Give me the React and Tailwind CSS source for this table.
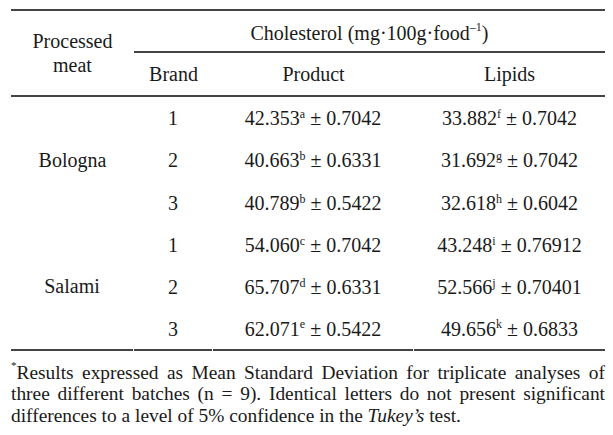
import React from 'react';

const rows = [
  { group: 'Bologna', items: [
    { brand: '1', p: '42.353', ps: 'a', pd: '0.7042', l: '33.882', ls: 'f', ld: '0.7042' },
    { brand: '2', p: '40.663', ps: 'b', pd: '0.6331', l: '31.692', ls: 'g', ld: '0.7042' },
    { brand: '3', p: '40.789', ps: 'b', pd: '0.5422', l: '32.618', ls: 'h', ld: '0.6042' },
  ] },
  { group: 'Salami', items: [
    { brand: '1', p: '54.060', ps: 'c', pd: '0.7042', l: '43.248', ls: 'i', ld: '0.76912' },
    { brand: '2', p: '65.707', ps: 'd', pd: '0.6331', l: '52.566', ls: 'j', ld: '0.70401' },
    { brand: '3', p: '62.071', ps: 'e', pd: '0.5422', l: '49.656', ls: 'k', ld: '0.6833' },
  ] },
];

const Val = ({ v, s, d }) => (
  <span>
    {v}<sup className="text-[12px] top-[-0.6em]">{s}</sup> ± {d}
  </span>
);

export default function App() {
  return (
    <div className="w-[613px] h-[435px] bg-white text-[#1a1a1a] pt-[9px] pl-[11px] font-['Liberation_Serif','Times_New_Roman',serif]">
      <div className="w-[594px]">
        <div className="grid grid-cols-[123px_79px_201px_191px] text-[20px] border-t-2 border-[#444]">
          {/* header */}
          <div className="row-span-2 flex flex-col items-center justify-center leading-[24px] border-b-2 border-[#444]">
            <span>Processed</span>
            <span>meat</span>
          </div>
          <div className="col-span-3 h-[42px] flex items-center justify-center pt-[3px] border-b-2 border-[#444]">
            <span>Cholesterol (mg·100g·food<sup className="text-[12px] top-[-0.7em]">–1</sup>)</span>
          </div>
          <div className="h-[44px] flex items-center justify-center border-b-2 border-[#444]">Brand</div>
          <div className="h-[44px] flex items-center justify-center border-b-2 border-[#444]">Product</div>
          <div className="h-[44px] flex items-center justify-center border-b-2 border-[#444]">Lipids</div>

          {/* body */}
          {rows.map((g, gi) => (
            <React.Fragment key={g.group}>
              <div className={`row-span-3 flex items-center justify-center ${gi === 1 ? 'border-b-2 border-[#444] mr-[1px]' : ''}`}>
                {g.group}
              </div>
              {g.items.map((r, ri) => {
                const last = gi === 1 && ri === 2;
                const b = last ? 'border-b-2 border-[#444]' : '';
                return (
                  <React.Fragment key={ri}>
                    <div className={`h-[42.3px] flex items-center justify-center mr-[1px] ${b}`}>{r.brand}</div>
                    <div className={`h-[42.3px] flex items-center justify-center mr-[1px] ${b}`}><Val v={r.p} s={r.ps} d={r.pd} /></div>
                    <div className={`h-[42.3px] flex items-center justify-center ${b}`}><Val v={r.l} s={r.ls} d={r.ld} /></div>
                  </React.Fragment>
                );
              })}
            </React.Fragment>
          ))}
        </div>

        {/* footnote, lines broken as in the source */}
        <div className="mt-[11px] text-[19.4px] leading-[21.5px]">
          <div className="text-justify [text-align-last:justify] whitespace-nowrap">
            <sup className="text-[11px] top-[-0.9em]">*</sup>Results expressed as Mean Standard Deviation for triplicate analyses of
          </div>
          <div className="text-justify [text-align-last:justify] whitespace-nowrap">
            three different batches (n = 9). Identical letters do not present significant
          </div>
          <div>
            differences to a level of 5% confidence in the <i>Tukey’s</i> test.
          </div>
        </div>
      </div>
    </div>
  );
}
